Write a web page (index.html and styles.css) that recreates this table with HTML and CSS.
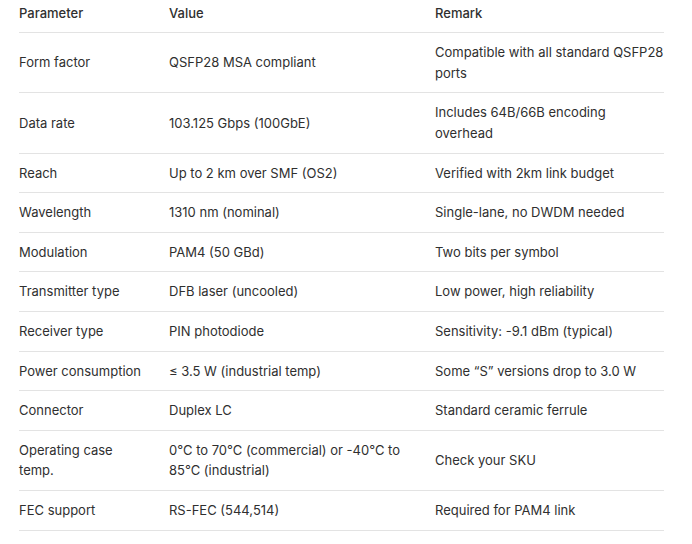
FILE: index.html
```html
<!DOCTYPE html>
<html>
<head>
<meta charset="utf-8">
<link rel="stylesheet" href="styles.css">
</head>
<body>
<table class="spec">
  <colgroup>
    <col class="c1"><col class="c2"><col class="c3">
  </colgroup>
  <thead>
    <tr><th>Parameter</th><th>Value</th><th>Remark</th></tr>
  </thead>
  <tbody>
    <tr><td>Form factor</td><td>QSFP28 MSA compliant</td><td>Compatible with all standard QSFP28 ports</td></tr>
    <tr><td>Data rate</td><td>103.125 Gbps (100GbE)</td><td>Includes 64B/66B encoding overhead</td></tr>
    <tr><td>Reach</td><td>Up to 2 km over SMF (OS2)</td><td>Verified with 2km link budget</td></tr>
    <tr><td>Wavelength</td><td>1310 nm (nominal)</td><td>Single-lane, no DWDM needed</td></tr>
    <tr><td>Modulation</td><td>PAM4 (50 GBd)</td><td>Two bits per symbol</td></tr>
    <tr><td>Transmitter type</td><td>DFB laser (uncooled)</td><td>Low power, high reliability</td></tr>
    <tr><td>Receiver type</td><td>PIN photodiode</td><td>Sensitivity: -9.1 dBm (typical)</td></tr>
    <tr><td>Power consumption</td><td>≤ 3.5 W (industrial temp)</td><td>Some “S” versions drop to 3.0 W</td></tr>
    <tr><td>Connector</td><td>Duplex LC</td><td>Standard ceramic ferrule</td></tr>
    <tr><td>Operating case temp.</td><td>0°C to 70°C (commercial) or -40°C to 85°C (industrial)</td><td>Check your SKU</td></tr>
    <tr><td>FEC support</td><td>RS-FEC (544,514)</td><td>Required for PAM4 link</td></tr>
  </tbody>
</table>
</body>
</html>
```
FILE: styles.css
```css
html, body {
  margin: 0;
  padding: 0;
  background: #ffffff;
}
body {
  font-family: Inter, "Liberation Sans", sans-serif;
  font-size: 13px;
  line-height: 20.8px;
  color: #2f2f2f;
}
.spec {
  margin-left: 19px;
  width: 645px;
  border-collapse: collapse;
  table-layout: fixed;
}
.c1 { width: 150px; }
.c2 { width: 266px; }
.c3 { width: 229px; }
.spec th {
  text-align: left;
  font-weight: 500;
  padding: 2.6px 16px 8.6px 0;
  border-bottom: 1px solid #e3e3e3;
  vertical-align: middle;
}
.spec td {
  padding: 8.9px 16px 8.9px 0;
  border-bottom: 1px solid #e3e3e3;
  vertical-align: middle;
}
.spec th:first-child,
.spec td:first-child {
  padding-right: 24px;
}
.spec th:last-child,
.spec td:last-child {
  padding-right: 0;
}
```
